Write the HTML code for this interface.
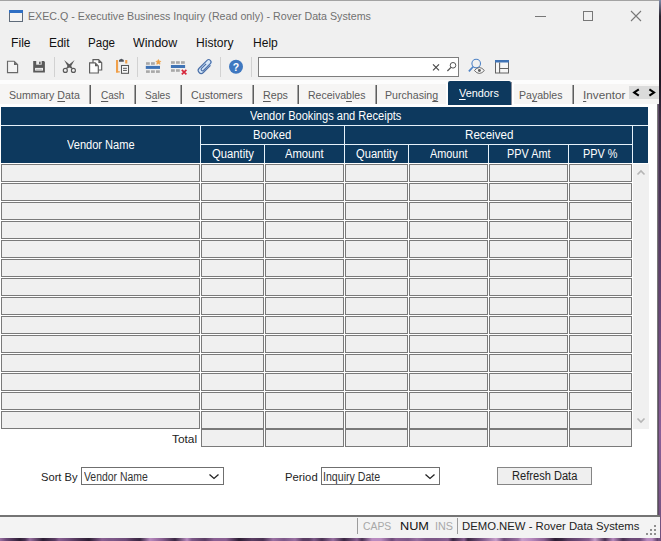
<!DOCTYPE html>
<html>
<head>
<meta charset="utf-8">
<title>EXEC.Q - Executive Business Inquiry (Read only) - Rover Data Systems</title>
<style>
html,body{margin:0;padding:0;}
body{width:661px;height:541px;overflow:hidden;background:#5b3d63;font-family:"Liberation Sans",sans-serif;position:relative;}
.abs{position:absolute;}
#wall-b{position:absolute;left:0;top:537px;width:661px;height:4px;background:linear-gradient(90deg,#9a70a2 0px,#6d4a78 6px,#2c1d33 20px,#4a3152 25px,#9a70a2 30px,#2c1d33 43px,#5b3d63 55px,#8a5f92 59px,#6d4a78 69px,#5b3d63 74px,#4a3152 79px,#2c1d33 89px,#8a5f92 102px,#7d5888 109px,#7d5888 113px,#6d4a78 126px,#5b3d63 130px,#4a3152 134px,#3a2742 140px,#b88abf 150px,#8a5f92 162px,#3a2742 175px,#b88abf 187px,#7d5888 192px,#5b3d63 205px,#8a5f92 214px,#8a5f92 226px,#2c1d33 239px,#5b3d63 252px,#4a3152 263px,#9a70a2 273px,#7d5888 284px,#9a70a2 295px,#5b3d63 303px,#5b3d63 309px,#7d5888 314px,#4a3152 322px,#9a70a2 333px,#3a2742 344px,#8a5f92 357px,#4a3152 362px,#b88abf 372px,#b88abf 381px,#6d4a78 392px,#8a5f92 396px,#7d5888 408px,#9a70a2 417px,#7d5888 426px,#7d5888 437px,#8a5f92 448px,#3a2742 453px,#8a5f92 464px,#3a2742 468px,#7d5888 482px,#c9a0cc 496px,#6d4a78 504px,#9a70a2 518px,#c9a0cc 522px,#b88abf 531px,#8a5f92 544px,#2c1d33 555px,#3a2742 562px,#5b3d63 568px,#6d4a78 578px,#8a5f92 589px,#c9a0cc 595px,#4a3152 605px,#b88abf 613px,#4a3152 623px,#6d4a78 631px,#6d4a78 640px,#b88abf 647px,#b88abf 652px,#5b3d63 658px);}
#wall-r{position:absolute;left:658px;top:0;width:3px;height:541px;background:linear-gradient(180deg,#7f8aa8 0%,#2a2530 3%,#1e1824 15%,#3a2d42 22%,#4a3555 35%,#6d4a7a 60%,#8a5f98 80%,#70507c 100%);}
#win{position:absolute;left:0;top:0;width:660px;height:538px;overflow:hidden;}
#winbg{position:absolute;left:0;top:0;width:659px;height:538px;background:#f0f0f0;}
#topline{position:absolute;left:0;top:0;width:659px;height:1px;background:#a3a3a3;}
#rightline{position:absolute;left:657px;top:104px;width:2px;height:411px;background:linear-gradient(90deg,#787878 0,#787878 50%,#5d4a66 50%,#5d4a66 100%);}
.t{position:absolute;white-space:nowrap;line-height:1;transform-origin:0 0;}
.t u{text-decoration:underline;text-decoration-thickness:1px;text-underline-offset:1.5px;text-decoration-skip-ink:none;}
.sep{position:absolute;top:85px;width:1px;height:19px;background:#5e5e5e;box-shadow:-1px 0 0 #a4a4a4;}
.tsep{position:absolute;top:57px;width:1px;height:20px;background:#d2d2d2;}
#tabstrip{position:absolute;left:0;top:84px;width:659px;height:20px;background:#f6f5f4;}
#band{position:absolute;left:0;top:80px;width:659px;height:4px;background:#fdfdfd;}
#content{position:absolute;left:0;top:104px;width:657px;height:412px;background:#fff;}
.hd{position:absolute;background:#0d395e;}
#hdbg{position:absolute;left:1px;top:107px;width:647px;height:56px;background:#e6f2fa;}
.cell{position:absolute;box-sizing:border-box;background:#f0f0f0;border:1px solid #7a7a7a;height:18px;}
.combo{position:absolute;box-sizing:border-box;background:#fff;border:1px solid #6f6f6f;}
#status{position:absolute;left:0;top:515px;width:660px;height:23px;background:#f3f3f3;border-top:2px solid #747474;box-sizing:border-box;}
.ssep{position:absolute;top:518px;width:1px;height:16px;background:#9c9c9c;}
</style>
</head>
<body>
<div id="wall-b"></div>
<div id="wall-r"></div>
<div id="win">
<div id="winbg"></div>
<div id="topline"></div>
<div id="band"></div>
<div id="tabstrip"></div>
<div id="content"></div>
<!-- title icon -->
<svg class="abs" style="left:9px;top:10px" width="15" height="13" viewBox="0 0 15 13">
<rect x="0.5" y="0.5" width="13" height="11" fill="#f4f4f4" stroke="#5f6b7a"/>
<rect x="0" y="0" width="14" height="3" fill="#2f6fc4"/>
</svg>
<svg class="abs" style="left:530px;top:8px" width="120" height="16" viewBox="0 0 120 16">
<path d="M5 8.5H16" stroke="#777" fill="none"/>
<rect x="53.5" y="3.5" width="9" height="9" stroke="#777" fill="none"/>
<path d="M101 3L111 13M111 3L101 13" stroke="#777" stroke-width="1.1" fill="none"/>
</svg>
<!-- toolbar icons: one svg covering x 0..520, y 54..80 -->
<svg class="abs" style="left:0;top:54px" width="520" height="26" viewBox="0 54 520 26">
<!-- new -->
<path d="M7.5 61.2H14.2L17.6 64.6V72.6H7.5Z" fill="#f3f3f3" stroke="#686868" stroke-width="1.15"/>
<path d="M14 61.4V64.9H17.5Z" fill="#686868"/>
<!-- save -->
<path d="M33.2 61H44L44.9 61.9V72.4H33.2Z" fill="#5a5a5a"/>
<rect x="36.2" y="61" width="5.5" height="3.7" fill="#ececec"/>
<rect x="39.1" y="61.7" width="1.5" height="2.4" fill="#5a5a5a"/>
<rect x="35.1" y="67.9" width="7.9" height="2.7" fill="#f0f0f0"/>
<rect x="36" y="68.9" width="6" height="0.7" fill="#b0b0b0"/>
<!-- scissors -->
<g fill="none" stroke="#5a5a5a" stroke-width="1.15">
<circle cx="65.3" cy="70.4" r="2"/><circle cx="73.4" cy="70.4" r="2"/>
</g>
<path d="M64.1 59.9L70.8 65.6L72.7 68.2L71.6 68.8L67.8 66.6Z" fill="#5a5a5a"/>
<path d="M74.6 59.9L67.9 65.6L66 68.2L67.1 68.8L70.9 66.6Z" fill="#5a5a5a"/>
<!-- copy -->
<path d="M93 59.6H98.6L101.7 62.7V70H93Z" fill="#fcfcfc" stroke="#5c5c5c" stroke-width="1.15"/>
<path d="M98.4 59.8V63H101.6Z" fill="#5c5c5c"/>
<path d="M89.6 62.8H95.2L98.3 65.9V73H89.6Z" fill="#fcfcfc" stroke="#5c5c5c" stroke-width="1.15"/>
<path d="M95 63V66.2H98.2Z" fill="#5c5c5c"/>
<!-- paste -->
<rect x="116" y="60" width="2.1" height="12.5" fill="#f0a04a"/>
<rect x="116" y="71.2" width="3.8" height="1.3" fill="#f0a04a"/>
<rect x="125.2" y="60" width="2.1" height="3.5" fill="#f0a04a"/>
<path d="M119 61.7V60.2Q119 59.6 120 59.6Q121.4 58 122.8 59.6Q123.8 59.6 123.8 60.2V61.7Z" fill="#50545c"/>
<rect x="121.5" y="65.5" width="7" height="7.8" fill="#fafafa" stroke="#585858" stroke-width="1.05"/>
<path d="M123 68.3H126.9M123 70.4H126.9" stroke="#555" stroke-width="1"/>
<!-- grid add -->
<g fill="#a8a8a8">
<rect x="146" y="62.2" width="3.8" height="2.6"/><rect x="151" y="62.2" width="3.8" height="2.6"/>
<rect x="146" y="70.3" width="3.8" height="2.6"/><rect x="151" y="70.3" width="3.8" height="2.6"/><rect x="156" y="70.3" width="3.8" height="2.6"/>
</g>
<rect x="145.8" y="65.9" width="14.2" height="3" fill="#3f73b5"/>
<path d="M158.4 59.6L159.2 61.2L160.8 61.4L159.6 62.6L160 64.2L158.4 63.4L156.8 64.2L157.2 62.6L156 61.4L157.6 61.2Z" fill="#eda145" stroke="#eda145" stroke-width="0.8" stroke-linejoin="round"/>
<!-- grid delete -->
<g fill="#a8a8a8">
<rect x="171" y="61.2" width="3.8" height="2.6"/><rect x="176" y="61.2" width="3.8" height="2.6"/><rect x="181" y="61.2" width="3.8" height="2.6"/>
<rect x="171" y="69.2" width="3.8" height="2.6"/><rect x="176" y="69.2" width="3.8" height="2.6"/>
</g>
<rect x="170.9" y="65" width="14.2" height="3" fill="#3f73b5"/>
<path d="M181.8 69.9L186.4 74.3M186.4 69.9L181.8 74.3" stroke="#d6283c" stroke-width="1.7" fill="none"/>
<!-- paperclip -->
<g transform="translate(205.2 66.4) rotate(-45)">
<rect x="-8.6" y="-3" width="17" height="6" rx="3" fill="#d6e7f8"/>
<path d="M4.5 3H-5.6A3 3 0 0 1 -5.6 -3H5.6A2.3 2.3 0 0 1 5.6 1.6H-4A1.4 1.4 0 0 1 -4 -1.2H2.5" fill="none" stroke="#4a6fa8" stroke-width="1.15"/>
</g>
<!-- help -->
<circle cx="236" cy="66.7" r="7" fill="#3f78c0"/>
<text x="236" y="70.6" font-family="Liberation Sans, sans-serif" font-size="10.5" font-weight="bold" fill="#fff" text-anchor="middle">?</text>
<!-- search box -->
<rect x="258.5" y="57.5" width="200" height="19" fill="#fff" stroke="#7d7d7d"/>
<path d="M433 64.3L439 70.3M439 64.3L433 70.3" stroke="#4a4a4a" stroke-width="1.2" fill="none"/>
<circle cx="453" cy="65.3" r="2.8" fill="none" stroke="#555" stroke-width="1"/>
<path d="M451 67.4L447.4 71" stroke="#555" stroke-width="1.3" fill="none"/>
<!-- eye search -->
<circle cx="476.2" cy="63.6" r="4.3" fill="none" stroke="#4f83c6" stroke-width="1.1"/>
<path d="M473.1 66.8L468.9 71.4" stroke="#4f83c6" stroke-width="1.7" fill="none"/>
<path d="M474.4 70.5Q479.4 64.6 484.4 70.5Q479.4 76.4 474.4 70.5Z" fill="#f6f6f6" stroke="#606060" stroke-width="0.9"/>
<circle cx="479.4" cy="70.5" r="1.45" fill="#606060"/>
<!-- layout -->
<rect x="495.5" y="61" width="13" height="12" fill="#f6f6f6" stroke="#636363" stroke-width="1"/>
<rect x="495" y="60" width="14" height="2.5" fill="#3f73b5"/>
<path d="M499.6 62.5V73M499.6 68.5H508.4" stroke="#636363" stroke-width="1.1" fill="none"/>
</svg>

<div class="tsep" style="left:54px"></div>
<div class="tsep" style="left:137px"></div>
<div class="tsep" style="left:220px"></div>
<div class="tsep" style="left:251px"></div>
<div class="sep" style="left:90px"></div>
<div class="sep" style="left:135px"></div>
<div class="sep" style="left:181px"></div>
<div class="sep" style="left:253px"></div>
<div class="sep" style="left:298px"></div>
<div class="sep" style="left:376px"></div>
<div class="sep" style="left:573px"></div>
<div class="abs" style="left:446px;top:84px;width:68px;height:20px;background:#fff"></div>
<div class="abs" style="left:448px;top:81px;width:63px;height:24px;background:#0d395e;border-radius:2px 2px 0 0"></div>
<div class="abs" style="left:511px;top:82px;width:1px;height:23px;background:#8b8d9a"></div>
<div class="abs" style="left:629px;top:86px;width:30px;height:13px;background:#dbdbdb"></div>
<svg class="abs" style="left:629px;top:86px" width="28" height="13" viewBox="0 0 28 13">
<path d="M9.8 3.4L5.2 6.5L9.8 9.6" stroke="#000" stroke-width="2.1" fill="none" stroke-linejoin="miter"/>
<path d="M20.4 3.4L25 6.5L20.4 9.6" stroke="#000" stroke-width="2.1" fill="none" stroke-linejoin="miter"/>
</svg>
<div id="hdbg"></div>
<div class="hd" style="left:1px;top:107px;width:647px;height:18px"></div>
<div class="hd" style="left:1px;top:126px;width:199px;height:37px"></div>
<div class="hd" style="left:201px;top:126px;width:143px;height:18px"></div>
<div class="hd" style="left:345px;top:126px;width:287px;height:18px"></div>
<div class="hd" style="left:201px;top:145px;width:63px;height:18px"></div>
<div class="hd" style="left:265px;top:145px;width:79px;height:18px"></div>
<div class="hd" style="left:345px;top:145px;width:63px;height:18px"></div>
<div class="hd" style="left:409px;top:145px;width:79px;height:18px"></div>
<div class="hd" style="left:489px;top:145px;width:79px;height:18px"></div>
<div class="hd" style="left:569px;top:145px;width:63px;height:18px"></div>
<div class="hd" style="left:633px;top:126px;width:15px;height:37px"></div>
<div class="abs" style="left:633px;top:164px;width:16px;height:265px;background:#f0f0f0"></div>
<svg class="abs" style="left:633px;top:164px" width="16" height="265" viewBox="0 0 16 265">
<path d="M4.5 10.5L8 7L11.5 10.5" stroke="#b5b5b5" stroke-width="1.6" fill="none"/>
<path d="M4.5 254.5L8 258L11.5 254.5" stroke="#b5b5b5" stroke-width="1.6" fill="none"/>
</svg>
<div class="cell" style="left:1px;top:164px;width:199px"></div>
<div class="cell" style="left:201px;top:164px;width:63px"></div>
<div class="cell" style="left:265px;top:164px;width:79px"></div>
<div class="cell" style="left:345px;top:164px;width:63px"></div>
<div class="cell" style="left:409px;top:164px;width:79px"></div>
<div class="cell" style="left:489px;top:164px;width:79px"></div>
<div class="cell" style="left:569px;top:164px;width:63px"></div>
<div class="cell" style="left:1px;top:183px;width:199px"></div>
<div class="cell" style="left:201px;top:183px;width:63px"></div>
<div class="cell" style="left:265px;top:183px;width:79px"></div>
<div class="cell" style="left:345px;top:183px;width:63px"></div>
<div class="cell" style="left:409px;top:183px;width:79px"></div>
<div class="cell" style="left:489px;top:183px;width:79px"></div>
<div class="cell" style="left:569px;top:183px;width:63px"></div>
<div class="cell" style="left:1px;top:202px;width:199px"></div>
<div class="cell" style="left:201px;top:202px;width:63px"></div>
<div class="cell" style="left:265px;top:202px;width:79px"></div>
<div class="cell" style="left:345px;top:202px;width:63px"></div>
<div class="cell" style="left:409px;top:202px;width:79px"></div>
<div class="cell" style="left:489px;top:202px;width:79px"></div>
<div class="cell" style="left:569px;top:202px;width:63px"></div>
<div class="cell" style="left:1px;top:221px;width:199px"></div>
<div class="cell" style="left:201px;top:221px;width:63px"></div>
<div class="cell" style="left:265px;top:221px;width:79px"></div>
<div class="cell" style="left:345px;top:221px;width:63px"></div>
<div class="cell" style="left:409px;top:221px;width:79px"></div>
<div class="cell" style="left:489px;top:221px;width:79px"></div>
<div class="cell" style="left:569px;top:221px;width:63px"></div>
<div class="cell" style="left:1px;top:240px;width:199px"></div>
<div class="cell" style="left:201px;top:240px;width:63px"></div>
<div class="cell" style="left:265px;top:240px;width:79px"></div>
<div class="cell" style="left:345px;top:240px;width:63px"></div>
<div class="cell" style="left:409px;top:240px;width:79px"></div>
<div class="cell" style="left:489px;top:240px;width:79px"></div>
<div class="cell" style="left:569px;top:240px;width:63px"></div>
<div class="cell" style="left:1px;top:259px;width:199px"></div>
<div class="cell" style="left:201px;top:259px;width:63px"></div>
<div class="cell" style="left:265px;top:259px;width:79px"></div>
<div class="cell" style="left:345px;top:259px;width:63px"></div>
<div class="cell" style="left:409px;top:259px;width:79px"></div>
<div class="cell" style="left:489px;top:259px;width:79px"></div>
<div class="cell" style="left:569px;top:259px;width:63px"></div>
<div class="cell" style="left:1px;top:278px;width:199px"></div>
<div class="cell" style="left:201px;top:278px;width:63px"></div>
<div class="cell" style="left:265px;top:278px;width:79px"></div>
<div class="cell" style="left:345px;top:278px;width:63px"></div>
<div class="cell" style="left:409px;top:278px;width:79px"></div>
<div class="cell" style="left:489px;top:278px;width:79px"></div>
<div class="cell" style="left:569px;top:278px;width:63px"></div>
<div class="cell" style="left:1px;top:297px;width:199px"></div>
<div class="cell" style="left:201px;top:297px;width:63px"></div>
<div class="cell" style="left:265px;top:297px;width:79px"></div>
<div class="cell" style="left:345px;top:297px;width:63px"></div>
<div class="cell" style="left:409px;top:297px;width:79px"></div>
<div class="cell" style="left:489px;top:297px;width:79px"></div>
<div class="cell" style="left:569px;top:297px;width:63px"></div>
<div class="cell" style="left:1px;top:316px;width:199px"></div>
<div class="cell" style="left:201px;top:316px;width:63px"></div>
<div class="cell" style="left:265px;top:316px;width:79px"></div>
<div class="cell" style="left:345px;top:316px;width:63px"></div>
<div class="cell" style="left:409px;top:316px;width:79px"></div>
<div class="cell" style="left:489px;top:316px;width:79px"></div>
<div class="cell" style="left:569px;top:316px;width:63px"></div>
<div class="cell" style="left:1px;top:335px;width:199px"></div>
<div class="cell" style="left:201px;top:335px;width:63px"></div>
<div class="cell" style="left:265px;top:335px;width:79px"></div>
<div class="cell" style="left:345px;top:335px;width:63px"></div>
<div class="cell" style="left:409px;top:335px;width:79px"></div>
<div class="cell" style="left:489px;top:335px;width:79px"></div>
<div class="cell" style="left:569px;top:335px;width:63px"></div>
<div class="cell" style="left:1px;top:354px;width:199px"></div>
<div class="cell" style="left:201px;top:354px;width:63px"></div>
<div class="cell" style="left:265px;top:354px;width:79px"></div>
<div class="cell" style="left:345px;top:354px;width:63px"></div>
<div class="cell" style="left:409px;top:354px;width:79px"></div>
<div class="cell" style="left:489px;top:354px;width:79px"></div>
<div class="cell" style="left:569px;top:354px;width:63px"></div>
<div class="cell" style="left:1px;top:373px;width:199px"></div>
<div class="cell" style="left:201px;top:373px;width:63px"></div>
<div class="cell" style="left:265px;top:373px;width:79px"></div>
<div class="cell" style="left:345px;top:373px;width:63px"></div>
<div class="cell" style="left:409px;top:373px;width:79px"></div>
<div class="cell" style="left:489px;top:373px;width:79px"></div>
<div class="cell" style="left:569px;top:373px;width:63px"></div>
<div class="cell" style="left:1px;top:392px;width:199px"></div>
<div class="cell" style="left:201px;top:392px;width:63px"></div>
<div class="cell" style="left:265px;top:392px;width:79px"></div>
<div class="cell" style="left:345px;top:392px;width:63px"></div>
<div class="cell" style="left:409px;top:392px;width:79px"></div>
<div class="cell" style="left:489px;top:392px;width:79px"></div>
<div class="cell" style="left:569px;top:392px;width:63px"></div>
<div class="cell" style="left:1px;top:411px;width:199px"></div>
<div class="cell" style="left:201px;top:411px;width:63px"></div>
<div class="cell" style="left:265px;top:411px;width:79px"></div>
<div class="cell" style="left:345px;top:411px;width:63px"></div>
<div class="cell" style="left:409px;top:411px;width:79px"></div>
<div class="cell" style="left:489px;top:411px;width:79px"></div>
<div class="cell" style="left:569px;top:411px;width:63px"></div>
<div class="cell" style="left:201px;top:429px;width:63px"></div>
<div class="cell" style="left:265px;top:429px;width:79px"></div>
<div class="cell" style="left:345px;top:429px;width:63px"></div>
<div class="cell" style="left:409px;top:429px;width:79px"></div>
<div class="cell" style="left:489px;top:429px;width:79px"></div>
<div class="cell" style="left:569px;top:429px;width:63px"></div>
<div class="combo" style="left:81px;top:467px;width:143px;height:18px"></div>
<div class="combo" style="left:321px;top:467px;width:119px;height:18px"></div>
<svg class="abs" style="left:208px;top:472px" width="12" height="8" viewBox="0 0 12 8"><path d="M1.5 2.5L6 6.5L10.5 2.5" stroke="#222" stroke-width="1.3" fill="none"/></svg>
<svg class="abs" style="left:424px;top:472px" width="12" height="8" viewBox="0 0 12 8"><path d="M1.5 2.5L6 6.5L10.5 2.5" stroke="#222" stroke-width="1.3" fill="none"/></svg>
<div class="abs" style="left:497px;top:467px;width:95px;height:18px;box-sizing:border-box;background:#efefef;border:1px solid #858585"></div>
<div id="status"></div>
<div class="ssep" style="left:357px"></div>
<div class="ssep" style="left:457px"></div>
<svg class="abs" style="left:645px;top:524px" width="12" height="12" viewBox="0 0 12 12" fill="#8f8f8f">
<rect x="9" y="1" width="2" height="2"/><rect x="5" y="5" width="2" height="2"/><rect x="9" y="5" width="2" height="2"/>
<rect x="1" y="9" width="2" height="2"/><rect x="5" y="9" width="2" height="2"/><rect x="9" y="9" width="2" height="2"/>
</svg>
<div class="t" style="left:27.7px;top:11.17px;font-size:11.5px;color:#717171;transform:scaleX(0.9282);">EXEC.Q - Executive Business Inquiry (Read only) - Rover Data Systems</div>
<div class="t" style="left:11.1px;top:37.32px;font-size:12.5px;color:#111;transform:scaleX(0.9724);">File</div>
<div class="t" style="left:48.5px;top:37.32px;font-size:12.5px;color:#111;transform:scaleX(0.9548);">Edit</div>
<div class="t" style="left:87.5px;top:37.32px;font-size:12.5px;color:#111;transform:scaleX(0.9260);">Page</div>
<div class="t" style="left:132.9px;top:37.32px;font-size:12.5px;color:#111;transform:scaleX(0.9939);">Window</div>
<div class="t" style="left:196.2px;top:37.32px;font-size:12.5px;color:#111;transform:scaleX(0.9639);">History</div>
<div class="t" style="left:252.6px;top:37.32px;font-size:12.5px;color:#111;transform:scaleX(0.9647);">Help</div>
<div class="t" style="left:9.1px;top:89.87px;font-size:11.5px;color:#5a5a5a;transform:scaleX(0.9229);">Summary <u>D</u>ata</div>
<div class="t" style="left:100.9px;top:89.87px;font-size:11.5px;color:#5a5a5a;transform:scaleX(0.8730);"><u>C</u>ash</div>
<div class="t" style="left:144.9px;top:89.87px;font-size:11.5px;color:#5a5a5a;transform:scaleX(0.8792);">S<u>a</u>les</div>
<div class="t" style="left:191.1px;top:89.87px;font-size:11.5px;color:#5a5a5a;transform:scaleX(0.9257);">C<u>u</u>stomers</div>
<div class="t" style="left:262.8px;top:89.87px;font-size:11.5px;color:#5a5a5a;transform:scaleX(0.9299);"><u>R</u>eps</div>
<div class="t" style="left:308.3px;top:89.87px;font-size:11.5px;color:#5a5a5a;transform:scaleX(0.9159);">Receiva<u>b</u>les</div>
<div class="t" style="left:385.3px;top:89.87px;font-size:11.5px;color:#5a5a5a;transform:scaleX(0.9241);">Purchasin<u>g</u></div>
<div class="t" style="left:519.2px;top:89.87px;font-size:11.5px;color:#5a5a5a;transform:scaleX(0.9191);">Pa<u>y</u>ables</div>
<div class="t" style="left:582.5px;top:89.87px;font-size:11.5px;color:#5a5a5a;transform:scaleX(1.0188);"><u>I</u>nventor</div>
<div class="t" style="left:459.2px;top:88.37px;font-size:11.5px;color:#fff;transform:scaleX(0.9451);"><u>V</u>endors</div>
<div class="t" style="left:249.8px;top:110.32px;font-size:12.5px;color:#fff;transform:scaleX(0.8857);">Vendor Bookings and Receipts</div>
<div class="t" style="left:66.8px;top:139.32px;font-size:12.5px;color:#fff;transform:scaleX(0.8844);">Vendor Name</div>
<div class="t" style="left:253.3px;top:129.32px;font-size:12.5px;color:#fff;transform:scaleX(0.9021);">Booked</div>
<div class="t" style="left:464.8px;top:129.32px;font-size:12.5px;color:#fff;transform:scaleX(0.9281);">Received</div>
<div class="t" style="left:211.5px;top:148.32px;font-size:12.5px;color:#fff;transform:scaleX(0.9017);">Quantity</div>
<div class="t" style="left:285.1px;top:148.32px;font-size:12.5px;color:#fff;transform:scaleX(0.8994);">Amount</div>
<div class="t" style="left:355.7px;top:148.32px;font-size:12.5px;color:#fff;transform:scaleX(0.8926);">Quantity</div>
<div class="t" style="left:430.0px;top:148.32px;font-size:12.5px;color:#fff;transform:scaleX(0.8705);">Amount</div>
<div class="t" style="left:507.2px;top:148.32px;font-size:12.5px;color:#fff;transform:scaleX(0.8695);">PPV Amt</div>
<div class="t" style="left:583.3px;top:148.32px;font-size:12.5px;color:#fff;transform:scaleX(0.8720);">PPV %</div>
<div class="t" style="left:172.1px;top:433.57px;font-size:11.5px;color:#222;transform:scaleX(1.0339);">Total</div>
<div class="t" style="left:41.2px;top:471.57px;font-size:11.5px;color:#222;transform:scaleX(0.9695);">Sort By</div>
<div class="t" style="left:284.7px;top:471.57px;font-size:11.5px;color:#222;transform:scaleX(0.9829);">Period</div>
<div class="t" style="left:84.2px;top:470.64px;font-size:12px;color:#333;transform:scaleX(0.8680);">Vendor Name</div>
<div class="t" style="left:323.2px;top:470.64px;font-size:12px;color:#333;transform:scaleX(0.8841);">Inquiry Date</div>
<div class="t" style="left:511.6px;top:470.44px;font-size:12px;color:#222;transform:scaleX(0.9247);">Refresh Data</div>
<div class="t" style="left:362.9px;top:521.21px;font-size:11.8px;color:#a8a8a8;transform:scaleX(0.8809);">CAPS</div>
<div class="t" style="left:399.6px;top:521.21px;font-size:11.8px;color:#111;transform:scaleX(1.0775);">NUM</div>
<div class="t" style="left:435.1px;top:521.21px;font-size:11.8px;color:#a8a8a8;transform:scaleX(0.9140);">INS</div>
<div class="t" style="left:461.7px;top:521.21px;font-size:11.8px;color:#222;transform:scaleX(0.9597);">DEMO.NEW - Rover Data Systems</div>
<div id="rightline"></div>
</div>
</body>
</html>
